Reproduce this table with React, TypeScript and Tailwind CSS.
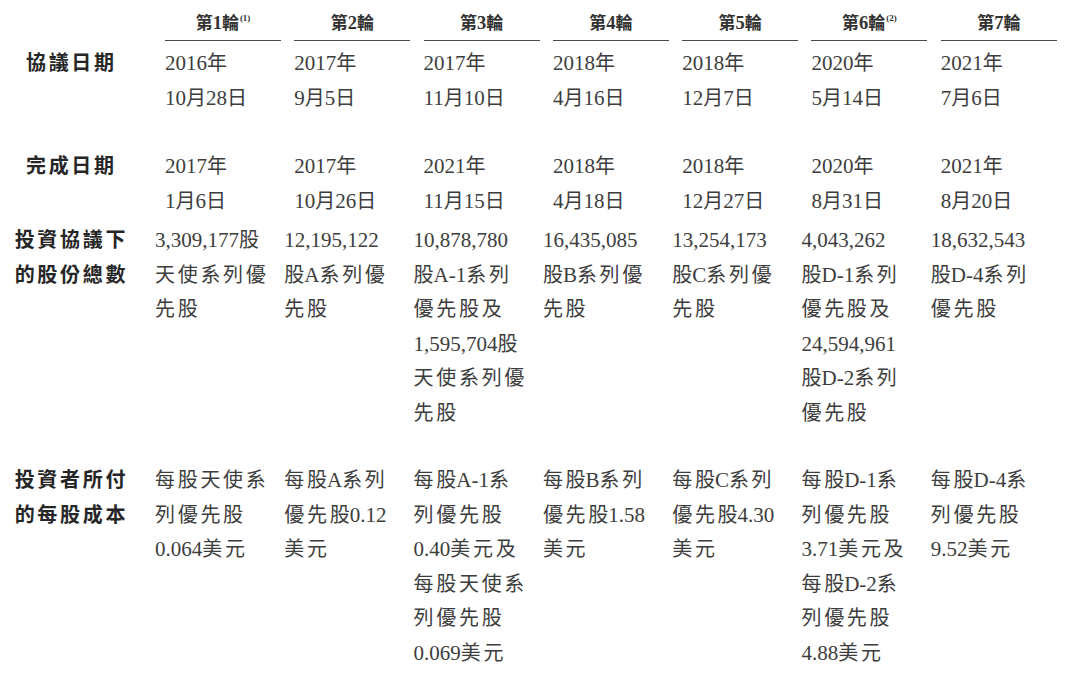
import React from "react";

type Row = { label: string[]; cells: string[][]; shift: string; gap: string };

const heads: [string, string?][] = [
    ["第1輪", "(1)"],
    ["第2輪"],
    ["第3輪"],
    ["第4輪"],
    ["第5輪"],
    ["第6輪", "(2)"],
    ["第7輪"],
];

const rows: Row[] = [
    {
        label: ["協議日期"],
        shift: "ml-[37px]",
        gap: "mt-[5px]",
        cells: [
            ["2016年", "10月28日"],
            ["2017年", "9月5日"],
            ["2017年", "11月10日"],
            ["2018年", "4月16日"],
            ["2018年", "12月7日"],
            ["2020年", "5月14日"],
            ["2021年", "7月6日"],
        ],
    },
    {
        label: ["完成日期"],
        shift: "ml-[37px]",
        gap: "mt-[34px]",
        cells: [
            ["2017年", "1月6日"],
            ["2017年", "10月26日"],
            ["2021年", "11月15日"],
            ["2018年", "4月18日"],
            ["2018年", "12月27日"],
            ["2020年", "8月31日"],
            ["2021年", "8月20日"],
        ],
    },
    {
        label: ["投資協議下", "的股份總數"],
        shift: "ml-[27px]",
        gap: "mt-[5px]",
        cells: [
            ["3,309,177股", "天使系列優", "先股"],
            ["12,195,122", "股A系列優", "先股"],
            ["10,878,780", "股A-1系列", "優先股及", "1,595,704股", "天使系列優", "先股"],
            ["16,435,085", "股B系列優", "先股"],
            ["13,254,173", "股C系列優", "先股"],
            ["4,043,262", "股D-1系列", "優先股及", "24,594,961", "股D-2系列", "優先股"],
            ["18,632,543", "股D-4系列", "優先股"],
        ],
    },
    {
        label: ["投資者所付", "的每股成本"],
        shift: "ml-[27px]",
        gap: "mt-[33px]",
        cells: [
            ["每股天使系", "列優先股", "0.064美元"],
            ["每股A系列", "優先股0.12", "美元"],
            ["每股A-1系", "列優先股", "0.40美元及", "每股天使系", "列優先股", "0.069美元"],
            ["每股B系列", "優先股1.58", "美元"],
            ["每股C系列", "優先股4.30", "美元"],
            ["每股D-1系", "列優先股", "3.71美元及", "每股D-2系", "列優先股", "4.88美元"],
            ["每股D-4系", "列優先股", "9.52美元"],
        ],
    },
];

const isCJK = (ch: string) => /[\u3000-\u9fff\uff00-\uffef]/.test(ch);

// CJK glyphs get a bit of room after them, but only when another CJK glyph follows
const Mixed = ({ text, cjk, space }: { text: string; cjk: string; space: string }) => {
    const chars = Array.from(text);
    return (
        <>
            {chars.map((ch, i) => {
                if (!isCJK(ch)) return <span key={i}>{ch}</span>;
                const next = chars[i + 1];
                const wide = next !== undefined && isCJK(next);
                return (
                    <span key={i} className={`${cjk} ${wide ? space : ""}`}>
                        {ch}
                    </span>
                );
            })}
        </>
    );
};

const App = () => {
    return (
        <div className="w-[1080px] h-[696px] overflow-hidden bg-white pl-[12px] text-[#3d3d3d] font-['Liberation_Serif','Noto_Sans_CJK_TC',serif]">
            {/* header */}
            <div className="flex">
                <div className="w-[116px] shrink-0"></div>
                <div className="ml-[37px] grid grid-cols-[repeat(7,116px)] gap-x-[13.3px]">
                    {heads.map(([h, note], i) => (
                        <div key={i} className="pt-[11px] pb-[2px] border-b-[1.5px] border-[#4a4a4a] text-center leading-[24px] text-[18.5px] font-bold text-[#333]">
                            <Mixed text={h} cjk="text-[17px]" space="mr-[1px]" />
                            {note && <span className="relative -top-[8px] ml-[1px] text-[9px] font-bold">{note}</span>}
                        </div>
                    ))}
                </div>
            </div>

            {rows.map((row, ri) => (
                <div key={ri} className={`flex ${row.gap}`}>
                    <div className="w-[116px] shrink-0 text-center leading-[34.5px] text-[20px] font-bold text-[#262626]">
                        {row.label.map((l, li) => (
                            <div key={li} className="whitespace-nowrap">
                                <Mixed text={l} cjk="" space="mr-[2.7px]" />
                            </div>
                        ))}
                    </div>
                    <div className={`${row.shift} grid grid-cols-[repeat(7,116px)] gap-x-[13.3px]`}>
                        {row.cells.map((cell, ci) => (
                            <div key={ci} className="leading-[34.5px] text-[21px]">
                                {cell.map((line, li) => (
                                    <div key={li} className="whitespace-nowrap">
                                        <Mixed text={line} cjk="text-[20px]" space="mr-[2.7px]" />
                                    </div>
                                ))}
                            </div>
                        ))}
                    </div>
                </div>
            ))}
        </div>
    );
};

export default App;
